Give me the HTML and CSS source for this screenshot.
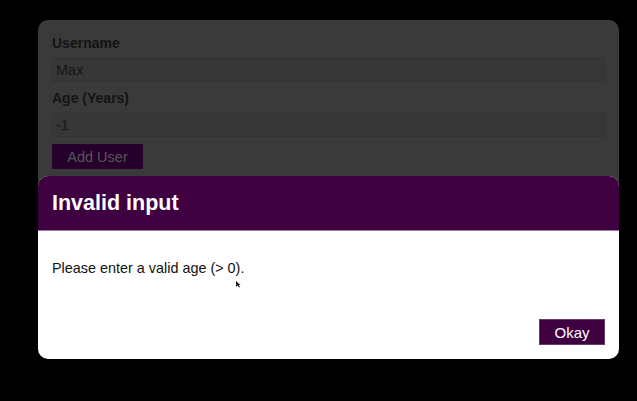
FILE: index.html
```html
<!DOCTYPE html>
<html>
<head>
<meta charset="utf-8">
<link rel="stylesheet" href="styles.css">
</head>
<body>
<div class="page">
  <form class="card">
    <label class="label">Username</label>
    <div class="input">Max</div>
    <label class="label">Age (Years)</label>
    <div class="input">-1</div>
    <div class="btn-row"><button type="button" class="add-btn">Add User</button></div>
  </form>
  <div class="modal">
    <header class="modal-header"><h2>Invalid input</h2></header>
    <div class="modal-body"><p>Please enter a valid age (&gt; 0).</p></div>
    <footer class="modal-footer"><button type="button" class="okay-btn">Okay</button></footer>
  </div>
  <svg class="cursor" width="5" height="7" viewBox="0 0 5 7"><path d="M0 0 L0 6 L1.5 4.5 L3 6.5 L4 6 L2.8 4 L4.6 4 Z" fill="#222"/></svg>
</div>
</body>
</html>
```
FILE: styles.css
```css
html, body {
  margin: 0;
  padding: 0;
  background: #000;
  font-family: "Liberation Sans", Arial, sans-serif;
}
.page {
  position: relative;
  width: 637px;
  height: 401px;
  overflow: hidden;
}
.card {
  margin: 20px 0 0 38px;
  width: 581px;
  box-sizing: border-box;
  padding: 14px 14px 20px;
  background: #3a3a3a;
  border-radius: 10px;
  display: flex;
  flex-direction: column;
}
.label {
  font-size: 14px;
  font-weight: bold;
  line-height: 18px;
  color: #141414;
  margin-bottom: 6px;
}
.input {
  height: 24px;
  box-sizing: border-box;
  border: 1px solid #333;
  background: #373737;
  color: #161616;
  font-size: 14.5px;
  line-height: 22px;
  padding-left: 3px;
  margin-bottom: 7px;
}
.btn-row { display: flex; }
.add-btn {
  width: 91px;
  height: 25px;
  background: #25002a;
  border: 1px solid #2d0031;
  color: #575757;
  font-family: inherit;
  font-size: 14.5px;
  padding: 0;
}
.modal {
  position: absolute;
  left: 38px;
  top: 176px;
  width: 581px;
  height: 183px;
  background: #fff;
  border-radius: 10px;
  overflow: hidden;
  display: flex;
  flex-direction: column;
}
.modal-header {
  height: 55px;
  box-sizing: border-box;
  background: #3e0041;
  border-bottom: 1px solid #a777ab;
  padding: 0 14px;
  display: flex;
  align-items: center;
}
.modal-header h2 {
  margin: 0;
  color: #fff;
  font-size: 21.5px;
  font-weight: bold;
}
.modal-body {
  flex: 1;
  padding: 0 14px;
}
.modal-body p {
  margin: 29px 0 0;
  font-size: 14.4px;
  line-height: 16px;
  color: #111;
}
.modal-footer {
  display: flex;
  justify-content: flex-end;
  padding: 0 14px 14px;
}
.okay-btn {
  width: 66px;
  height: 26px;
  background: #3e0041;
  border: 1px solid #6a3a6e;
  color: #fff;
  font-family: inherit;
  font-size: 15px;
  padding: 0;
}
.cursor {
  position: absolute;
  left: 236px;
  top: 281px;
}
```
